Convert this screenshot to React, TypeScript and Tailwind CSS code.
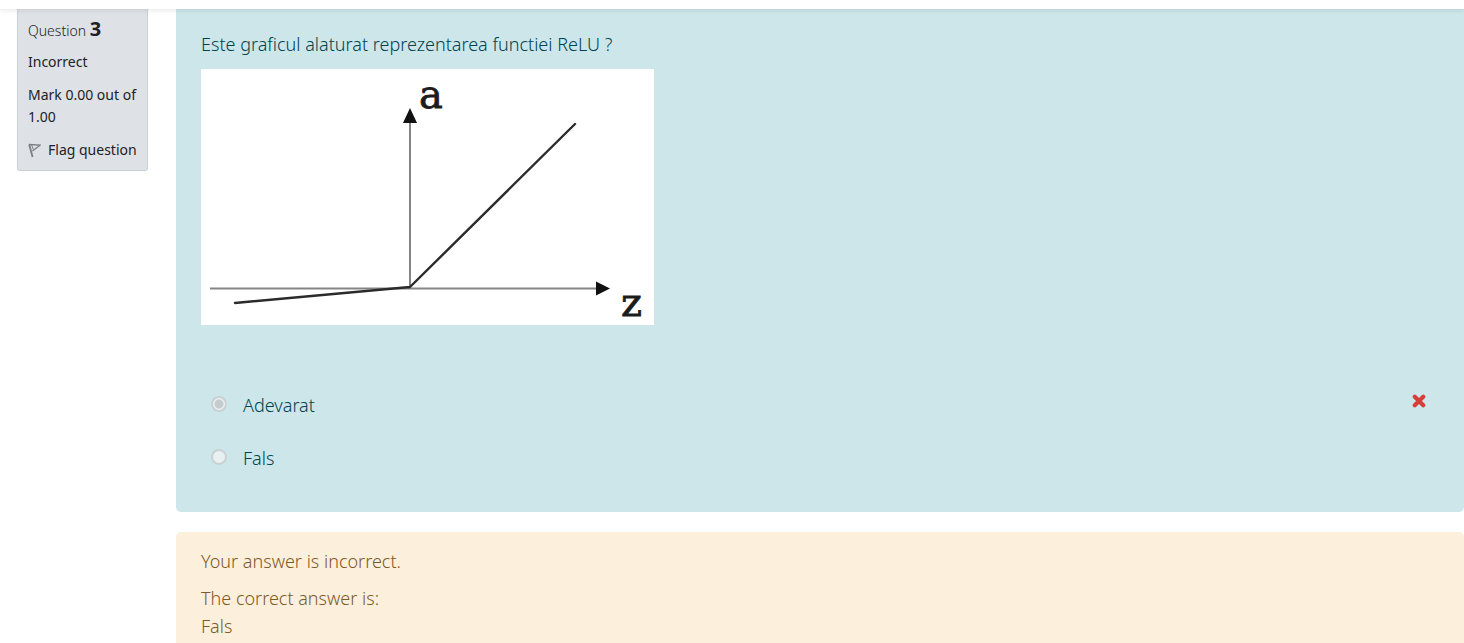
import React from "react";

const options = [
  { id: "adevarat", label: "Adevarat", chosen: true },
  { id: "fals", label: "Fals", chosen: false },
];

function FlagIcon() {
  return (
    <svg width="13" height="16" viewBox="0 0 13 16" fill="none" stroke="#7c7f83" aria-hidden="true">
      <path d="M1.2 2.5 L4.6 15" strokeWidth="1.8" />
      <path d="M1 2.5 L12 3.2 L4.4 9" strokeWidth="1.3" />
      <path d="M3.6 3 L5.4 7.5" strokeWidth="1" />
    </svg>
  );
}

function CrossIcon() {
  return (
    <svg className="mt-[3px] self-start" width="14" height="14" viewBox="0 0 14 14" role="img" aria-label="Incorrect">
      <path d="M2.8 2.8 L11.2 11.2 M11.2 2.8 L2.8 11.2" stroke="#d43f3a" strokeWidth="4.2" strokeLinecap="round" />
    </svg>
  );
}

function Graph() {
  return (
    <svg className="block h-auto w-full max-w-[453px] bg-white" viewBox="0 0 453 256" role="img" aria-label="Graph of a against z">
      <g stroke="#858585" strokeWidth="2">
        <path d="M209 218 V52" />
        <path d="M9 219.5 H396" />
      </g>
      <path d="M209 39 L216 54 H202 Z" fill="#111" />
      <path d="M409 219.5 L395 212.5 V226.5 Z" fill="#111" />
      <path d="M34 234 L209 218 L374 55" fill="none" stroke="#2b2b2b" strokeWidth="2.4" strokeLinecap="round" strokeLinejoin="round" />
      <g className="font-['DejaVu_Serif',serif]" fill="#1c1c1c" stroke="#1c1c1c" strokeWidth="0.8">
        <text x="218" y="39" fontSize="40">a</text>
        <text x="420" y="247" fontSize="40">z</text>
      </g>
    </svg>
  );
}

export default function App() {
  return (
    <div className="flex min-h-screen flex-col bg-white font-['Noto_Sans',sans-serif]">
      <header className="z-10 h-[9px] shrink-0 bg-white shadow-[0_2px_4px_rgba(0,0,0,0.08)]" />
      <div className="flex flex-1 gap-7 pl-[17px]">
        <aside className="flex w-[131px] shrink-0 flex-col gap-[10px] self-start rounded-b-[3px] border border-t-0 border-[#cad0d7] bg-[#dee2e6] px-[10px] pt-[9px] pb-[9px] text-[14px] leading-[22px] text-[#1d2125]">
          <h3 className="font-light leading-[22px]">
            Question <span className="text-[20px] leading-[22px] font-bold">3</span>
          </h3>
          <div className="-mt-px flex flex-col gap-[11px]">
            <div>Incorrect</div>
            <div>Mark 0.00 out of 1.00</div>
            <a href="#flag" className="flex items-center gap-[7px] whitespace-nowrap">
              <FlagIcon />
              Flag question
            </a>
          </div>
        </aside>
        <main className="flex min-w-0 flex-1 flex-col gap-5 text-[18px] leading-7 font-[350]">
          <form className="rounded-b-[5px] bg-[#cce6ea] px-[25px] pt-[21px] pb-10 text-[#00434e]">
            <p className="mb-[11px]">Este graficul alaturat reprezentarea functiei ReLU ?</p>
            <Graph />
            <fieldset aria-label="Answer" className="mt-[66px] flex flex-col gap-[25px] pr-[13px] pl-[10px]">
              {options.map((o) => (
                <div key={o.id} className="flex items-start">
                  <input
                    type="radio"
                    id={o.id}
                    name="answer"
                    disabled
                    defaultChecked={o.chosen}
                    className="mt-[5px] mr-4 size-4 appearance-none rounded-full border-2 border-[#c9d1d2] bg-[#e9f0f1] checked:bg-[radial-gradient(circle,#c5cccd_4px,#e9f0f1_5px)]"
                  />
                  <label htmlFor={o.id} className="flex-1">{o.label}</label>
                  {o.chosen && <CrossIcon />}
                </div>
              ))}
            </fieldset>
          </form>
          <section className="flex-1 rounded-t-[5px] bg-[#fcefdc] px-[25px] pt-[15px] text-[#7d5a29]">
            <p className="mb-[9px]">Your answer is incorrect.</p>
            <p>The correct answer is:</p>
            <p>Fals</p>
          </section>
        </main>
      </div>
    </div>
  );
}
